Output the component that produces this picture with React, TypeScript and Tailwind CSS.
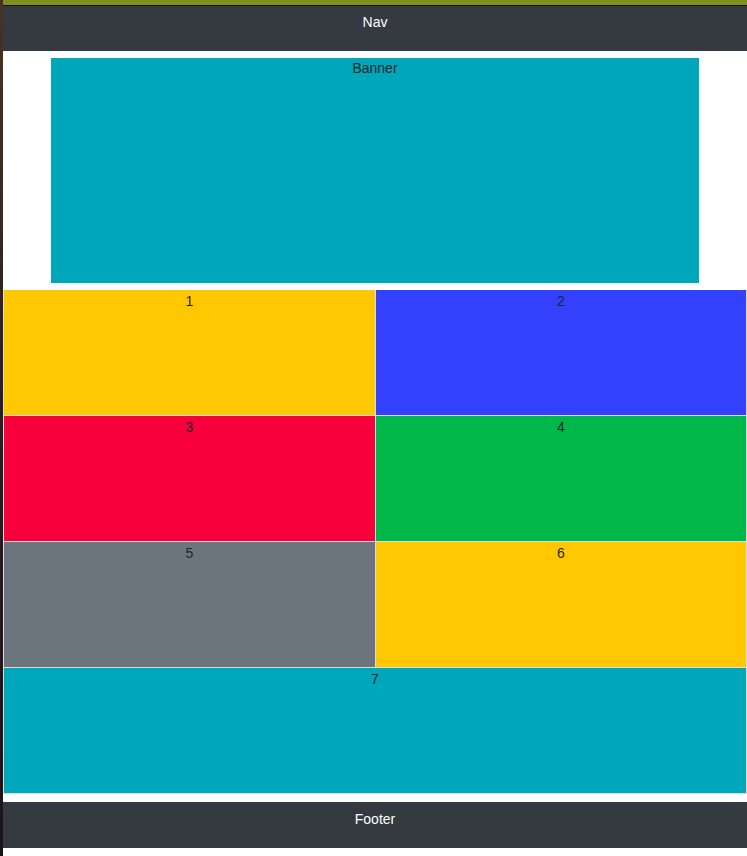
import React from "react";

const font = { fontFamily: '"Liberation Sans", Arial, sans-serif' };

function Cell({ label, color, span }: { label: string; color: string; span?: boolean }) {
  return (
    <div className={`${color} ${span ? "col-span-2" : ""} h-[125px] text-center text-[14px] leading-[22px] text-[#212529]`}>
      {label}
    </div>
  );
}

export default function App() {
  return (
    <div className="flex min-h-[856px] w-[747px] bg-white" style={font}>
      <div className="w-[3px] shrink-0 bg-gradient-to-b from-[#4a3222] via-[#2a1d1e] to-[#1c1418]" />
      <div className="flex w-[744px] flex-col">
        <div className="h-[5px] bg-[#7f9020]" />
        <div className="h-px bg-[#111]" />
        <div className="h-[45px] bg-[#343a40] pt-[6px] text-center text-[14px] leading-[20px] text-white">Nav</div>
        <div className="flex justify-center pt-[7px] pb-[7px]">
          <div className="h-[225px] w-[648px] bg-[#00a6ba] pt-[1px] text-center text-[14px] leading-[18px] text-[#212529]">Banner</div>
        </div>
        <div className="grid grid-cols-[371px_370px] gap-px bg-[#dcdcdc] pl-px pr-px pb-px">
          <Cell label="1" color="bg-[#ffc800]" />
          <Cell label="2" color="bg-[#3341ff]" />
          <Cell label="3" color="bg-[#f8003c]" />
          <Cell label="4" color="bg-[#00b84a]" />
          <Cell label="5" color="bg-[#6c757d]" />
          <Cell label="6" color="bg-[#ffc800]" />
          <Cell label="7" color="bg-[#00a6ba]" span />
        </div>
        <div className="h-[8px]" />
        <div className="h-[46px] bg-[#343a40] pt-[7px] text-center text-[14px] leading-[20px] text-white">Footer</div>
        <div className="flex-1 bg-white" />
      </div>
    </div>
  );
}
